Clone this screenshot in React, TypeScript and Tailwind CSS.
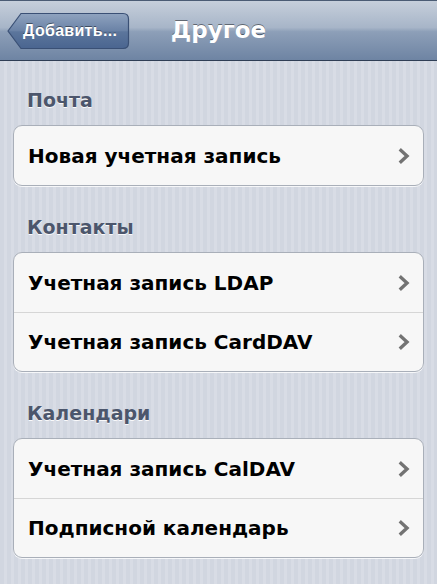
const font = { fontFamily: '"Liberation Sans", Arial, sans-serif' };

function Chevron() {
  return (
    <svg width="12" height="16" viewBox="0 0 12 16" className="shrink-0">
      <polyline
        points="3,2.5 9,8 3,13.5"
        fill="none"
        stroke="#737373"
        strokeWidth="3.4"
        strokeLinecap="square"
        strokeLinejoin="miter"
      />
    </svg>
  );
}

function BackButton({ label }: { label: string }) {
  return (
    <button type="button" className="relative h-[38px] w-[123px] flex items-center pl-[16px]">
      <svg width="123" height="38" viewBox="0 0 123 38" className="absolute left-0 top-0">
        <defs>
          <linearGradient id="bb" x1="0" y1="0" x2="0" y2="1">
            <stop offset="0" stopColor="#8fa3bf" />
            <stop offset="0.5" stopColor="#6a82a6" />
            <stop offset="0.52" stopColor="#5c769c" />
            <stop offset="1" stopColor="#4a6590" />
          </linearGradient>
        </defs>
        <path
          d="M1 19 L14 1.5 H116 Q121.5 1.5 121.5 7 V31 Q121.5 36.5 116 36.5 H14 Z"
          fill="url(#bb)"
          stroke="#3a5075"
          strokeWidth="1.2"
        />
      </svg>
      <span className="relative text-[16px] tracking-[0.3px] font-bold text-white [text-shadow:0_-1px_0_rgba(0,0,0,0.45)]">
        {label}
      </span>
    </button>
  );
}

function NavBar() {
  return (
    <div className="relative h-[61px] flex items-center px-[7px] border-t border-t-[#4b5c74] border-b border-b-[#2f3e55] bg-[linear-gradient(180deg,#c6cfdb_0%,#a7b5c8_45%,#8d9fb8_52%,#6e84a3_100%)]">
      <BackButton label="Добавить..." />
      <div className="absolute inset-x-0 top-0 bottom-0 flex items-center justify-center pointer-events-none">
        <span className="font-['DejaVu_Sans',sans-serif] text-[23px] font-bold text-white [text-shadow:0_-1px_0_rgba(0,0,0,0.45)]">
          Другое
        </span>
      </div>
    </div>
  );
}

function Section({ title, items, first }: { title: string; items: string[]; first?: boolean }) {
  return (
    <section className={first ? "" : "mt-[29px]"}>
      <h2 className="px-[27px] h-[24px] leading-[24px] font-['DejaVu_Sans',sans-serif] text-[19px] font-bold text-[#4c566c] [text-shadow:0_1px_0_rgba(255,255,255,0.9)]">
        {title}
      </h2>
      <div className="mt-[13px] mx-[13px] rounded-[9px] border border-[#a9afb9] bg-[#f7f7f7] shadow-[0_1px_0_rgba(255,255,255,0.8)] overflow-hidden">
        {items.map((item, i) => (
          <div
            key={item}
            className={
              "h-[59px] flex items-center justify-between pl-[14px] pr-[13px]" +
              (i > 0 ? " border-t border-[#d6d6d6]" : "")
            }
          >
            <span className="font-['DejaVu_Sans',sans-serif] text-[20px] font-bold text-black">{item}</span>
            <Chevron />
          </div>
        ))}
      </div>
    </section>
  );
}

export default function App() {
  return (
    <div
      style={font}
      className="w-[437px] h-[584px] overflow-hidden bg-[repeating-linear-gradient(90deg,#d1d6e0_0px,#d1d6e0_4px,#d8dce5_4px,#d8dce5_7px)]"
    >
      <NavBar />
      <main className="pt-[27px]">
        <Section first title="Почта" items={["Новая учетная запись"]} />
        <Section title="Контакты" items={["Учетная запись LDAP", "Учетная запись CardDAV"]} />
        <Section title="Календари" items={["Учетная запись CalDAV", "Подписной календарь"]} />
      </main>
    </div>
  );
}
